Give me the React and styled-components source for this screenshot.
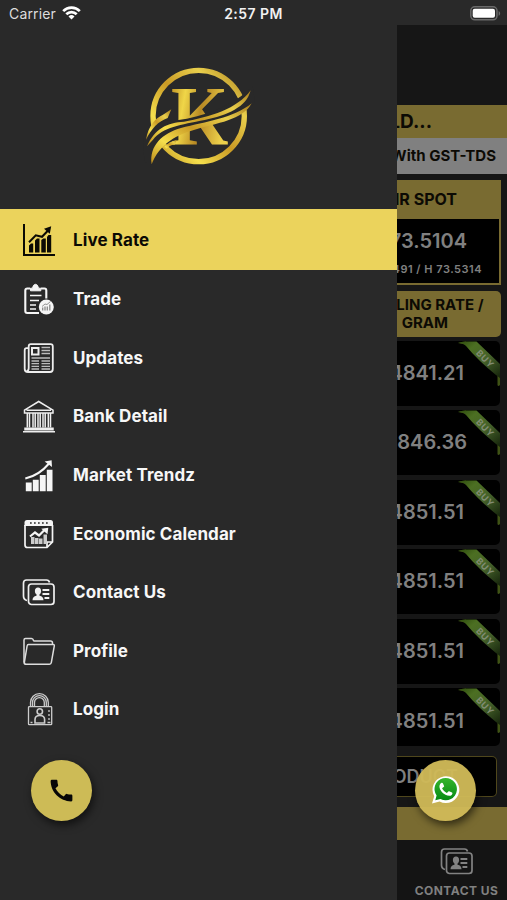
import {MdCall} from "react-icons/md";
import styled, {createGlobalStyle} from "styled-components";

const menu = [
  {label: "Live Rate", icon: LiveRateIcon},
  {label: "Trade", icon: TradeIcon},
  {label: "Updates", icon: UpdatesIcon},
  {label: "Bank Detail", icon: BankIcon},
  {label: "Market Trendz", icon: MarketIcon},
  {label: "Economic Calendar", icon: CalendarIcon},
  {label: "Contact Us", icon: ContactIcon},
  {label: "Profile", icon: ProfileIcon},
  {label: "Login", icon: LoginIcon},
];

const rates = ["4841.21", "4846.36", "4851.51", "4851.51", "4851.51", "4851.51"];

const App = () => {
  return (
    <Screen>
      <GlobalStyle />
      <StatusBar>
        <Carrier>
          Carrier <WifiIcon />
        </Carrier>
        <Clock>2:57 PM</Clock>
        <BatteryWrap>
          <BatteryIcon />
        </BatteryWrap>
      </StatusBar>
      <Body>
        <Drawer>
          <LogoWrap>
            <Logo />
          </LogoWrap>
          <Menu>
            {menu.map(({label, icon: Icon}, i) => (
              <MenuItem key={label} $active={i === 0}>
                <Icon />
                <span>{label}</span>
              </MenuItem>
            ))}
          </Menu>
        </Drawer>
        <Page>
          <Marquee>GOLD...</Marquee>
          <TaxBar>With GST-TDS</TaxBar>
          <SpotCard>
            <SpotTitle>INR SPOT</SpotTitle>
            <SpotValue>73.5104</SpotValue>
            <SpotRange>L 73.4491 / H 73.5314</SpotRange>
          </SpotCard>
          <RateHeader>
            <span>SELLING RATE /</span>
            <RateUnit>GRAM</RateUnit>
          </RateHeader>
          <Rates>
            {rates.map((rate, i) => (
              <RateRow key={i} $last={i === rates.length - 1}>
                <RateValue $wide={rate === "4846.36"}>{rate}</RateValue>
                <Ribbon id={i} />
              </RateRow>
            ))}
          </Rates>
          <ProductBox>PRODUCT</ProductBox>
          <GoldBar />
          <Tab>
            <ContactIcon />
            <TabLabel>CONTACT US</TabLabel>
          </Tab>
        </Page>
      </Body>
      <Fab $left="31px" $color="#cdbb56">
        <MdCall size={29} color="#070707" />
      </Fab>
      <Fab $left="415px" $color="rgba(207, 185, 87, 0.96)">
        <WhatsappIcon />
      </Fab>
    </Screen>
  );
};

export default App;

function WifiIcon() {
  return (
    <svg width="19" height="14" viewBox="0 0 19 14" fill="none" stroke="#fff" strokeWidth="2.7">
      <path d="M1.2 5.1a11.8 11.8 0 0 1 16.6 0" />
      <path d="M4.3 8.2a7.4 7.4 0 0 1 10.4 0" />
      <path d="M9.5 13.4 6.5 10.4a4.3 4.3 0 0 1 6 0z" fill="#fff" stroke="none" />
    </svg>
  );
}

function BatteryIcon() {
  return (
    <svg width="31" height="15" viewBox="0 0 31 15">
      <rect x="0.8" y="0.8" width="26.2" height="13" rx="4" fill="none" stroke="#6a6a6a" strokeWidth="1.5" />
      <rect x="2.7" y="2.8" width="22.3" height="9" rx="2" fill="#fff" />
      <path d="M28.6 5v4.8c2-.8 2-4 0-4.8z" fill="#6a6a6a" />
    </svg>
  );
}

function Logo() {
  return (
    <svg width="130" height="120" viewBox="0 0 390 360">
      <defs>
        <linearGradient id="gold" x1="0" y1="1" x2="1" y2="0">
          <stop offset="0" stopColor="#b98a1b" />
          <stop offset="0.25" stopColor="#f5df4d" />
          <stop offset="0.5" stopColor="#c99a25" />
          <stop offset="0.75" stopColor="#e9cf4c" />
          <stop offset="1" stopColor="#a87b1b" />
        </linearGradient>
        <linearGradient id="goldK" x1="0" y1="0" x2="1" y2="0.3">
          <stop offset="0" stopColor="#b5851d" />
          <stop offset="0.3" stopColor="#f0d648" />
          <stop offset="0.6" stopColor="#b98a24" />
          <stop offset="1" stopColor="#ecd04b" />
        </linearGradient>
      </defs>
      <circle cx="191" cy="183" r="137" fill="none" stroke="url(#gold)" strokeWidth="16" />
      <text
        x="108"
        y="269"
        fontFamily="Liberation Serif, serif"
        fontWeight="700"
        fontSize="256"
        textLength="172"
        lengthAdjust="spacingAndGlyphs"
        fill="url(#goldK)"
      >
        K
      </text>
      <path
        d="M24 254C50 205 83 190 126 196C205 186 294 153 353 94L360 143C318 188 230 197 168 218C112 237 73 267 46 335L28 318Z"
        fill="#292929"
      />
      <path d="M33 254C40 211 62 189 84 179L109 163L98 189C70 199 50 220 33 254z" fill="url(#gold)" />
      <path d="M36 274C58 221 98 202 147 200C225 186 307 162 347 106C335 157 276 181 209 195C137 209 83 217 54 254z" fill="url(#gold)" />
      <path d="M50 328C42 271 83 235 138 219C212 200 296 190 350 145C324 195 244 205 179 224C113 243 72 272 50 328z" fill="url(#gold)" />
      <path d="M85 278Q102 259 126 254L119 269Q103 269 91 285z" fill="url(#gold)" />
    </svg>
  );
}

function LiveRateIcon() {
  return (
    <IconSvg viewBox="0 0 34 34">
      <path d="M2 1v31h31" fill="none" stroke="#0b0a04" strokeWidth="2" />
      <path d="M7 22.5 9 20.5h2.200V29.500H7zM13 17.500l2-2h2.500v14H13zM19.300 17l2-1.500h2.500v14h-4.500zM25 14l1.500-2h2.700v17.500H25z" fill="#0b0a04" />
      <path d="M7 19.300 13.800 12.300 20 13.800 26.500 7" fill="none" stroke="#0b0a04" strokeWidth="2" />
      <path d="m22 5.800 7.200-2.600-1.400 7.600z" fill="#0b0a04" />
    </IconSvg>
  );
}

function TradeIcon() {
  return (
    <IconSvg viewBox="0 0 34 34" fill="none" stroke="#f5f5f5" strokeWidth="2.100">
      <path d="M8 6.500H5.300Q3.300 6.500 3.300 8.500V29Q3.300 31 5.300 31H17M19 6.500h3.500Q24.300 6.500 24.300 8.500v8" />
      <path d="M8.500 8.800V6.200h2Q11 2.500 13.500 2.300 16 2.500 16.500 6.200h2.300v2.600z" fill="#f5f5f5" strokeWidth="1" />
      <path d="M8 13.500h11.500M8 18.500h9M8 23h6M8 27h6" strokeWidth="1.700" />
      <circle cx="24.300" cy="25" r="7.500" fill="#f5f5f5" stroke="none" />
      <path d="M20.700 28.500v-3M23 28.500v-4M25.300 28.500v-4M27.800 28.500v-6" stroke="#888" strokeWidth="1.300" />
      <path d="m20 24.500 3-2.500 2 .5 3.500-3" stroke="#888" strokeWidth="0.900" />
    </IconSvg>
  );
}

function UpdatesIcon() {
  return (
    <IconSvg viewBox="0 0 34 34" fill="none" stroke="#eee" strokeWidth="1.800">
      <path d="M6.700 7.200H4.500Q2.700 7.200 2.700 9.500V28Q2.700 31 6 31H28Q30.800 31 30.800 28V5.500Q30.800 3.200 28.500 3.200H8.800Q6.700 3.200 6.700 5.500V27Q6.700 30 4.700 30" />
      <rect x="10" y="7" width="6.500" height="6.500" strokeWidth="2" />
      <path d="M19.500 6.500h8.500M19.500 9.500h8.500M19.500 12.500h8.500M9.500 17h18.500M9.500 20h7.500M19.500 20h8.500M9.500 22.700h7.500M19.500 22.700h8.500M9.500 25.400h7.500M19.500 25.400h8.500M9.500 28h7.500M19.500 28h8.500" stroke="#bbb" strokeWidth="1.300" />
    </IconSvg>
  );
}

function BankIcon() {
  return (
    <IconSvg viewBox="0 0 34 34" fill="none" stroke="#eee" strokeWidth="1.500">
      <path d="M2.500 11.200 16.700 2.500l14.300 8.700V14H2.500zM4.500 11.300h24.500" />
      <path d="M5.300 14v14.500M7.500 14v14.500M11 14v14.500M13.200 14v14.500M16 14v14.500M18.200 14v14.500M21 14v14.500M23.200 14v14.500M26.300 14v14.500M28.500 14v14.500" strokeWidth="1.500" />
      <path d="M3 29.200h28v1.500H3zM1 32.800h32" />
    </IconSvg>
  );
}

function MarketIcon() {
  return (
    <IconSvg viewBox="0 0 34 34" fill="#f5f5f5">
      <path d="M3.800 24.500h5.900v8.800H3.800zM10.800 21.700h5.900v11.600h-5.900zM17.800 17h5.900v16.300h-5.900zM24.800 11.800h5.700v21.500h-5.700z" />
      <path d="M3.300 20.500Q17 17.500 27 5.500" fill="none" stroke="#f5f5f5" strokeWidth="2" />
      <path d="m22.600 3.400 7-1.200.4 6.800z" />
    </IconSvg>
  );
}

function CalendarIcon() {
  return (
    <IconSvg viewBox="0 0 34 34" fill="#f5f5f5">
      <path d="M5 3h23.500q2.500 0 2.500 2.500V9H2.500V5.500Q2.500 3 5 3z" />
      <path d="M3 8v20q0 2.500 2.500 2.500H25l5.500-5.500V8M25 30.500V25h5.500" fill="none" stroke="#f5f5f5" strokeWidth="1.700" />
      <path d="M8 6h19" stroke="#292929" strokeWidth="1.700" strokeDasharray="1.700 2.300" />
      <path d="M9 20h3.500v7H9zM13 21h3.500v6H13zM17 21.500h3.500V27H17zM21.500 17.500H25V27h-3.500z" fill="#ccc" />
      <path d="m8 19.500 5-4 4 3 6-6" fill="none" stroke="#f5f5f5" strokeWidth="2.200" />
      <path d="m19.300 11.800 7-1.100-.8 6.500z" />
    </IconSvg>
  );
}

function ContactIcon() {
  return (
    <IconSvg viewBox="0 0 34 34" fill="none" stroke="#f0f0f0" strokeWidth="1.700">
      <path d="M5 25.500Q1.500 24.500 1.500 21V8Q1.500 5 4.500 5H24.500Q27 5 27.500 7.500" />
      <rect x="6.500" y="9" width="25.500" height="20.500" rx="3" />
      <ellipse cx="16" cy="16" rx="3.100" ry="3.600" fill="#f0f0f0" stroke="none" />
      <path d="M10.500 25.300q0-3.700 4-4.500V18h3v2.800q4 .8 4 4.500z" fill="#f0f0f0" stroke="none" />
      <path d="M20.500 15h6.800M20.500 19h6.800M22.500 23h4.800" strokeWidth="1.800" />
    </IconSvg>
  );
}

function ProfileIcon() {
  return (
    <IconSvg viewBox="0 0 34 34" fill="none" stroke="#ddd" strokeWidth="1.500" strokeLinejoin="round">
      <path d="M3 30 2 28V6q0-1.500 1.500-1.500h6q1.500 0 2 2l.5.500h16.500Q30.500 7 30.500 9v1.500" />
      <path d="M6.500 10.500h24.500q1.500 0 1.300 1.300l-3 16.900q-.3 1.500-1.800 1.500H3.500Q2 30.200 2.300 28.700l2.800-16.700q.2-1.500 1.400-1.500z" />
    </IconSvg>
  );
}

function LoginIcon() {
  return (
    <IconSvg viewBox="0 0 34 34" fill="none" stroke="#ccc" strokeWidth="1.300">
      <path d="M8.500 14.500V10.500a8.900 8.900 0 0 1 17.800 0v4M12.500 14.500v-4a4.900 4.900 0 0 1 9.800 0v4M10.500 14.500v-4a6.900 6.900 0 0 1 13.800 0v4" />
      <rect x="6.500" y="14.700" width="23.200" height="18" rx="0.800" />
      <circle cx="17.800" cy="19.500" r="2.700" strokeWidth="1.600" />
      <path d="M13 31v-3.500q0-4 4.800-4t4.800 4V31z" strokeWidth="1.600" />
      <path d="M27 18v2M27 22v2M27 26v2M25.500 30.500h3M8.500 30.500h2" />
    </IconSvg>
  );
}

function Ribbon({id}) {
  return (
    <RibbonSvg width="43" height="47" viewBox="0 0 43 47">
      <defs>
        <linearGradient id={`ribbon${id}`} x1="0" y1="0" x2="1" y2="1">
          <stop offset="0" stopColor="#2c4a0c" />
          <stop offset="0.25" stopColor="#4c6f22" />
          <stop offset="0.6" stopColor="#44602a" />
          <stop offset="1" stopColor="#14220a" />
        </linearGradient>
      </defs>
      <path d="M0 2Q3 .5 8 .5L9 4zM42 35v9q-2 2-2.500 0V34z" fill="#3f5215" />
      <path d="M0 2Q3 .5 8 .5H18.500L42 23V37L38 34Q20 19.500 8 5 5 1.500 0 2z" fill={`url(#ribbon${id})`} />
      <text
        transform="translate(17.500 12.500) rotate(46)"
        fontFamily="Inter, sans-serif"
        fontSize="9"
        fontWeight="700"
        letterSpacing="0.700"
        fill="#828d74"
      >
        BUY
      </text>
    </RibbonSvg>
  );
}

function WhatsappIcon() {
  return (
    <svg width="30" height="30" viewBox="0 0 30 30">
      <defs>
        <linearGradient id="wa" x1="0" y1="0" x2="0" y2="1">
          <stop offset="0" stopColor="#36b52c" />
          <stop offset="1" stopColor="#078a14" />
        </linearGradient>
      </defs>
      <path d="M1 28.500 3.200 21.200A13.400 13.400 0 1 1 8.600 26.500z" fill="#fff" />
      <path d="M4.300 25.200 5.600 20.600A11.200 11.200 0 1 1 9.500 24z" fill="url(#wa)" />
      <g transform="translate(6.300 5.500) scale(0.720)">
        <path
          d="M6.620 10.790c1.440 2.830 3.760 5.140 6.590 6.590l2.200-2.200c.27-.27.67-.36 1.020-.24l4 1.800c.55.300.8.700.57 1.300-.5 2-2 3.200-4 3.200C9 21 3 14 3 8.500 3 6 4 4.500 5.500 3.500c.8-.4 2-.3 2.400.5l1.500 3.500c.2.500.1.900-.2 1.300z"
          fill="#fff"
        />
      </g>
    </svg>
  );
}

const GlobalStyle = createGlobalStyle`
  * {
    box-sizing: border-box;
  }
  body {
    margin: 0;
    background: #292929;
    font-family: Inter, sans-serif;
  }
`;

const Screen = styled.div`
  position: relative;
  width: 507px;
  height: 900px;
  overflow: hidden;
  background: #292929;
`;

const StatusBar = styled.div`
  display: grid;
  grid-template-columns: 1fr auto 1fr;
  align-items: center;
  height: 25px;
  padding: 1px 6px 0 9px;
  color: #f1f1f1;
  font-size: 14px;
`;

const Carrier = styled.div`
  display: flex;
  align-items: center;
  gap: 6px;
  color: #ddd;
  letter-spacing: 0.15px;
`;

const Clock = styled.div`
  margin-right: 3px;
  font-weight: 600;
  letter-spacing: 0.45px;
`;

const BatteryWrap = styled.div`
  display: flex;
  justify-content: flex-end;
`;

const Body = styled.div`
  display: flex;
  height: 875px;
`;

const Drawer = styled.div`
  flex: 0 0 397px;
  background: #292929;
`;

const LogoWrap = styled.div`
  height: 183.5px;
  padding: 30px 0 0 135px;
`;

const Menu = styled.div`
  display: flex;
  flex-direction: column;
`;

const MenuItem = styled.div`
  display: flex;
  align-items: center;
  gap: 17px;
  height: ${({$active}) => ($active ? "61.2px" : "58.65px")};
  padding: ${({$active}) => ($active ? "2px 22px 0" : "0 22px")};
  background: ${({$active}) => ($active ? "#ebd35c" : "transparent")};
  color: ${({$active}) => ($active ? "#0b0a04" : "#f7f7f7")};
  font-size: 17px;
  font-weight: 700;
  letter-spacing: 0.1px;
`;

const IconSvg = styled.svg`
  flex: none;
  width: 34px;
  height: 34px;
`;

/* the page under the open drawer, only its right edge is visible */
const Page = styled.div`
  flex: 1;
  min-width: 0;
  overflow: hidden;
  padding-top: 80px;
  background: #161616;
  color: #0c0a04;
  font-weight: 700;
  white-space: nowrap;
`;

const Marquee = styled.div`
  display: flex;
  align-items: center;
  justify-content: flex-end;
  height: 33px;
  padding-right: 75px;
  background: #796b31;
  font-size: 19px;
`;

const TaxBar = styled.div`
  display: flex;
  align-items: center;
  justify-content: flex-end;
  height: 36px;
  padding: 0 11px 2px 0;
  background: #808080;
  font-size: 15px;
`;

const SpotCard = styled.div`
  display: flex;
  flex-direction: column;
  align-items: flex-end;
  height: 104.5px;
  margin: 6px 6px 0 0;
  border: 2px solid #796b31;
  border-left: none;
  background: #000;
  color: #808080;
`;

const SpotTitle = styled.div`
  display: flex;
  align-items: center;
  justify-content: flex-end;
  align-self: stretch;
  height: 36.5px;
  padding: 0 42px 2px 0;
  background: #796b31;
  color: #0c0a04;
  font-size: 16px;
`;

const SpotValue = styled.div`
  margin: 9px 32px 0 0;
  font-size: 20px;
  font-weight: 600;
  line-height: 26px;
`;

const SpotRange = styled.div`
  margin: 8px 17px 0 0;
  font-size: 11px;
  font-weight: 600;
  line-height: 14px;
  letter-spacing: 0.5px;
`;

const RateHeader = styled.div`
  display: flex;
  flex-direction: column;
  align-items: flex-end;
  justify-content: center;
  height: 46.5px;
  margin: 6px 6px 0 0;
  padding-right: 17.5px;
  border-radius: 0 5px 5px 0;
  background: #796b31;
  font-size: 15px;
  line-height: 17.5px;
`;

const RateUnit = styled.span`
  margin-right: 35.5px;
`;

const Rates = styled.div`
  display: flex;
  flex-direction: column;
  gap: 4.6px;
  margin-top: 3.5px;
`;

const RateRow = styled.div`
  position: relative;
  display: flex;
  align-items: center;
  justify-content: flex-end;
  height: ${({$last}) => ($last ? "57.5px" : "65px")};
  margin-right: 7px;
  padding-bottom: ${({$last}) => ($last ? "0" : "1px")};
  padding-top: ${({$last}) => ($last ? "7px" : "0")};
  border-radius: 0 5px 5px 0;
  background: #000;
`;

const RateValue = styled.div`
  padding-right: ${({$wide}) => ($wide ? "33px" : "36px")};
  color: #808080;
  font-size: 20px;
  font-weight: 600;
`;

/* folded over the corner of its row */
const RibbonSvg = styled.svg`
  position: absolute;
  top: 0;
  right: -1px;
`;

const ProductBox = styled.div`
  display: flex;
  align-items: center;
  justify-content: flex-end;
  height: 41px;
  margin: 10px 10px 0 0;
  padding-right: 30px;
  border: 1px solid #4f471c;
  border-left: none;
  border-radius: 0 5px 5px 0;
  background: #000;
  color: #808080;
  font-size: 18px;
  font-weight: 600;
  padding-right: 38px;
`;

const GoldBar = styled.div`
  height: 33px;
  margin-top: 10.5px;
  background: #796b31;
`;

const Tab = styled.div`
  display: flex;
  flex-direction: column;
  align-items: center;
  height: 60px;
  padding: 4px 0 0 9px;
  background: #141414;
  color: #808080;

  & svg {
    opacity: 0.5;
  }
`;

const TabLabel = styled.div`
  margin-top: 5px;
  font-size: 12px;
  line-height: 15px;
  letter-spacing: 0.45px;
`;

const Fab = styled.div`
  position: absolute;
  top: 759.5px;
  left: ${({$left}) => $left};
  display: grid;
  place-items: center;
  width: 61px;
  height: 61px;
  border-radius: 50%;
  background: ${({$color}) => $color};
  box-shadow: 2px 4px 8px rgba(0, 0, 0, 0.6);
`;
